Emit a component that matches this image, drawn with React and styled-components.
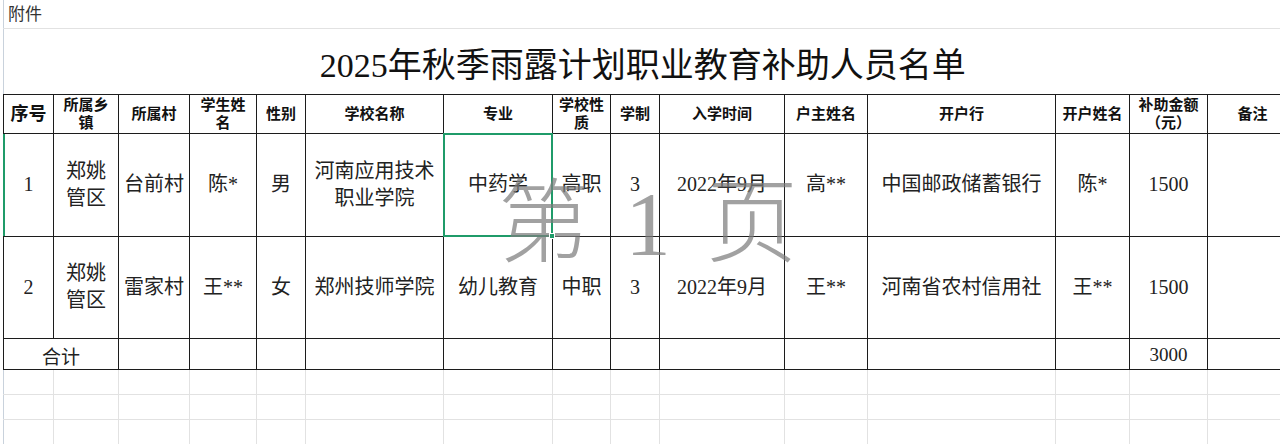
import styled, { createGlobalStyle, css } from 'styled-components';

const GlobalStyle = createGlobalStyle`
  html, body {
    margin: 0;
    background: #fff;
    overflow: hidden;
  }
  body {
    font-family: "Liberation Serif", "Noto Sans CJK SC", serif;
    color: #1f1f1f;
  }
`;

const columnWidths = [50, 65, 71, 67, 49, 138, 109, 58, 49, 125, 83, 188, 74, 78, 90];

const headers = [
  ['序号'],
  ['所属乡', '镇'],
  ['所属村'],
  ['学生姓', '名'],
  ['性别'],
  ['学校名称'],
  ['专业'],
  ['学校性', '质'],
  ['学制'],
  ['入学时间'],
  ['户主姓名'],
  ['开户行'],
  ['开户姓名'],
  ['补助金额', '（元）'],
  ['备注'],
];

const students = [
  {
    height: 103,
    cells: [
      ['1'],
      ['郑姚', '管区'],
      ['台前村'],
      ['陈*'],
      ['男'],
      ['河南应用技术', '职业学院'],
      ['中药学'],
      ['高职'],
      ['3'],
      ['2022年9月'],
      ['高**'],
      ['中国邮政储蓄银行'],
      ['陈*'],
      ['1500'],
      [''],
    ],
    selected: 6,
    active: true,
  },
  {
    height: 102,
    cells: [
      ['2'],
      ['郑姚', '管区'],
      ['雷家村'],
      ['王**'],
      ['女'],
      ['郑州技师学院'],
      ['幼儿教育'],
      ['中职'],
      ['3'],
      ['2022年9月'],
      ['王**'],
      ['河南省农村信用社'],
      ['王**'],
      ['1500'],
      [''],
    ],
  },
];

const lines = (parts) =>
  parts.map((p, i) => (
    <span key={i}>
      {i > 0 && <br />}
      {p}
    </span>
  ));

const App = () => {
  return (
    <Sheet>
      <GlobalStyle />
      <Grid>
        <colgroup>
          {columnWidths.map((w, i) => (
            <col key={i} style={{ width: w }} />
          ))}
        </colgroup>
        <tbody>
          <Row $h={28}>
            <NoteCell colSpan={15}>附件</NoteCell>
          </Row>
          <Row $h={66}>
            <TitleCell colSpan={15}>2025年秋季雨露计划职业教育补助人员名单</TitleCell>
          </Row>
          <Row $h={39}>
            {headers.map((h, i) => (
              <HeadCell key={i} $big={i === 0}>
                {lines(h)}
              </HeadCell>
            ))}
          </Row>
          {students.map((s, r) => (
            <Row key={r} $h={s.height}>
              {s.cells.map((c, i) => (
                <Cell
                  key={i}
                  $selected={s.selected === i}
                  $active={s.active && i === 0}
                >
                  {lines(c)}
                </Cell>
              ))}
            </Row>
          ))}
          <Row $h={31}>
            <TotalCell colSpan={2}>合计</TotalCell>
            {columnWidths.slice(2).map((_, i) => (
              <TotalCell key={i}>{i === 11 ? '3000' : ''}</TotalCell>
            ))}
          </Row>
          {[0, 1, 2].map((r) => (
            <Row key={r} $h={25}>
              {columnWidths.map((_, i) => (
                <BlankCell key={i} />
              ))}
            </Row>
          ))}
        </tbody>
      </Grid>
      <Watermark>第 1 页</Watermark>
    </Sheet>
  );
};

const frame = '#c9d2dc';
const ink = '#1c1c1c';
const gridline = '#e2e2e2';
const green = '#1f9b69';

const Sheet = styled.div`
  position: relative;
  width: 1280px;
  height: 444px;
  overflow: hidden;
`;

const Grid = styled.table`
  border-collapse: collapse;
  table-layout: fixed;
  width: ${columnWidths.reduce((a, b) => a + b, 0)}px;
  margin-left: 3px;
`;

const Row = styled.tr`
  height: ${(p) => p.$h}px;
`;

const NoteCell = styled.td`
  padding: 0 0 2px 4px;
  border-left: 1px solid ${frame};
  border-bottom: 1px solid ${gridline};
  font-family: "Noto Sans CJK SC", sans-serif;
  font-size: 17px;
  color: #333;
  vertical-align: middle;
`;

const TitleCell = styled.td`
  padding: 2px 16px 0 0;
  border-left: 1px solid ${frame};
  border-bottom: 1px solid ${ink};
  text-align: center;
  font-size: 34px;
  color: #111;
  vertical-align: middle;
`;

const boxed = css`
  padding: 0 2px;
  border: 1px solid ${ink};
  text-align: center;
  vertical-align: middle;
`;

const HeadCell = styled.th`
  ${boxed}
  font-size: ${(p) => (p.$big ? 18 : 15)}px;
  line-height: 18px;
  font-weight: 700;
  color: #111;
`;

const Cell = styled.td`
  ${boxed}
  position: relative;
  font-size: 20px;
  line-height: 27px;
  color: #222;
  ${(p) =>
    p.$active &&
    css`
      border-left-color: ${green};
      box-shadow: inset 1px 0 0 ${green};
    `}
  ${(p) =>
    p.$selected &&
    css`
      &::after {
        content: '';
        position: absolute;
        inset: -1px -1px -1px -1px;
        border: 2px solid ${green};
        pointer-events: none;
      }
      &::before {
        content: '';
        position: absolute;
        right: -3px;
        bottom: -3px;
        width: 4px;
        height: 4px;
        background: ${green};
        border: 1px solid #fff;
        z-index: 1;
      }
    `}
`;

const TotalCell = styled.td`
  ${boxed}
  font-size: 19px;
  color: #222;
  padding-top: 3px;
`;

const BlankCell = styled.td`
  border-right: 1px solid ${gridline};
  border-bottom: 1px solid ${gridline};
  &:first-child {
    border-left: 1px solid ${frame};
  }
`;

const Watermark = styled.div`
  position: absolute;
  left: 498px;
  top: 178px;
  font-size: 92px;
  line-height: 1;
  font-weight: 300;
  letter-spacing: 6px;
  white-space: pre;
  color: rgba(125, 125, 125, 0.72);
  pointer-events: none;
`;

export default App;
